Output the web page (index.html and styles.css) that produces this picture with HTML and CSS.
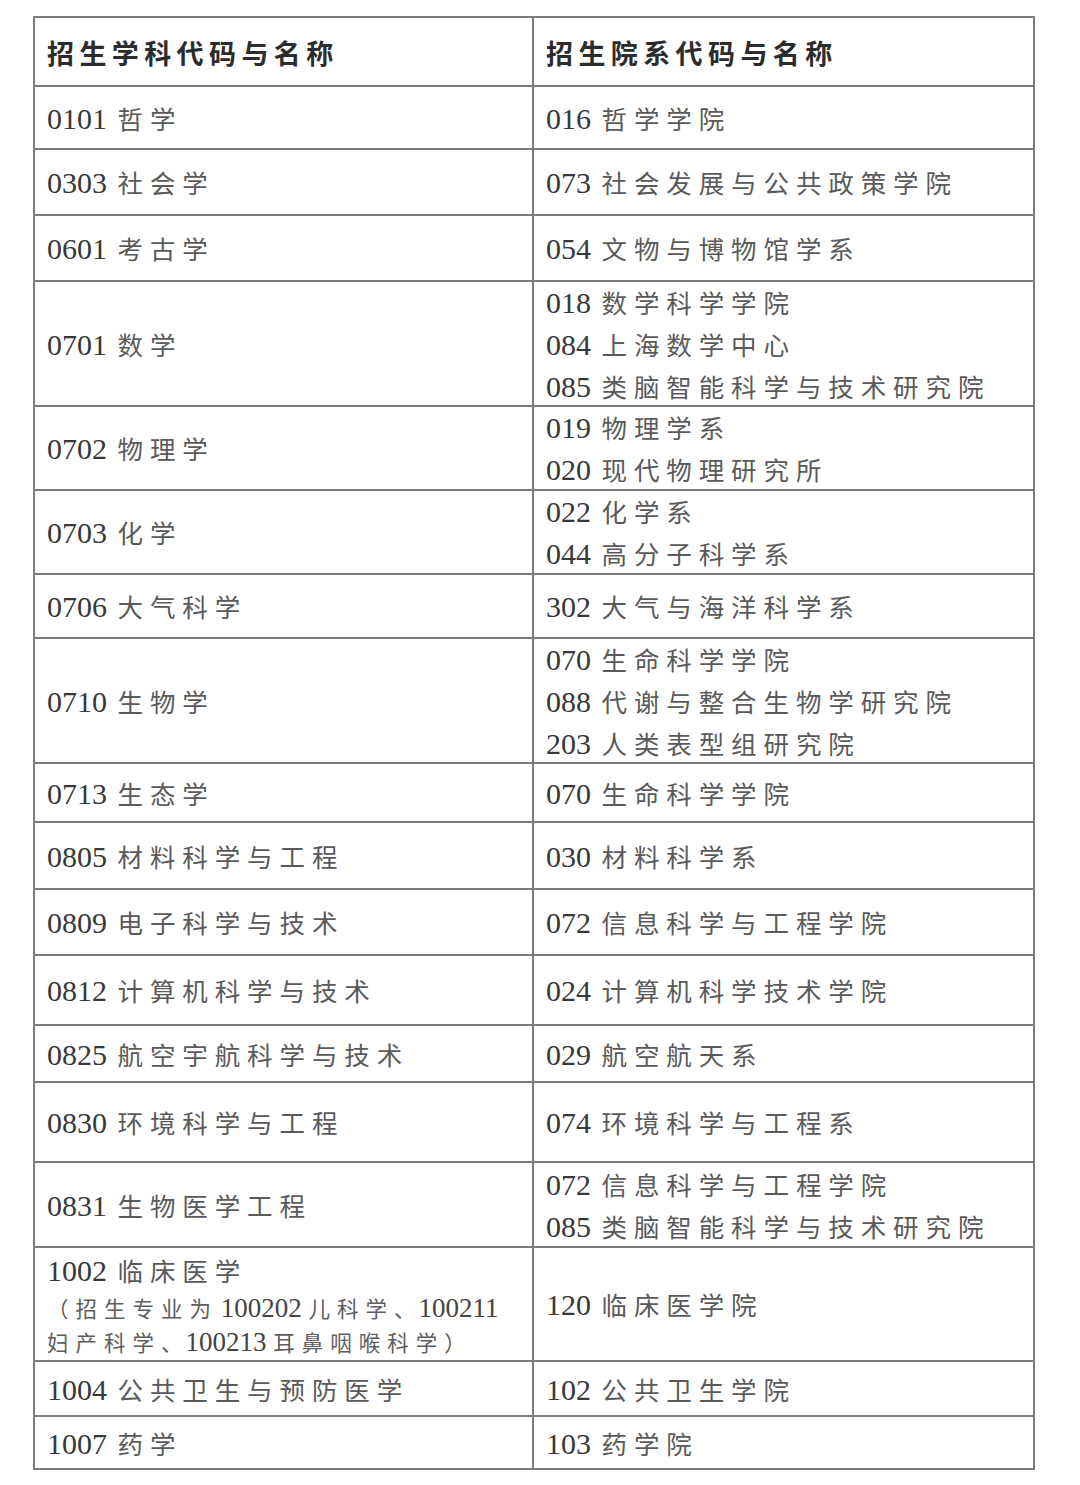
FILE: index.html
```html
<!DOCTYPE html>
<html lang="zh-CN">
<head>
<meta charset="utf-8">
<title>招生学科与院系</title>
<link rel="stylesheet" href="styles.css">
</head>
<body>
<div class="sheet">
  <div class="cell head"><span class="h">招生学科代码与名称</span></div>
  <div class="cell head"><span class="h">招生院系代码与名称</span></div>

  <div class="cell"><div class="ln"><span class="c">0101</span> <span class="n">哲学</span></div></div>
  <div class="cell"><div class="ln"><span class="c">016</span> <span class="n">哲学学院</span></div></div>

  <div class="cell"><div class="ln"><span class="c">0303</span> <span class="n">社会学</span></div></div>
  <div class="cell"><div class="ln"><span class="c">073</span> <span class="n">社会发展与公共政策学院</span></div></div>

  <div class="cell"><div class="ln"><span class="c">0601</span> <span class="n">考古学</span></div></div>
  <div class="cell"><div class="ln"><span class="c">054</span> <span class="n">文物与博物馆学系</span></div></div>

  <div class="cell"><div class="ln"><span class="c">0701</span> <span class="n">数学</span></div></div>
  <div class="cell">
    <div class="ln"><span class="c">018</span> <span class="n">数学科学学院</span></div>
    <div class="ln"><span class="c">084</span> <span class="n">上海数学中心</span></div>
    <div class="ln"><span class="c">085</span> <span class="n">类脑智能科学与技术研究院</span></div>
  </div>

  <div class="cell"><div class="ln"><span class="c">0702</span> <span class="n">物理学</span></div></div>
  <div class="cell">
    <div class="ln"><span class="c">019</span> <span class="n">物理学系</span></div>
    <div class="ln"><span class="c">020</span> <span class="n">现代物理研究所</span></div>
  </div>

  <div class="cell"><div class="ln"><span class="c">0703</span> <span class="n">化学</span></div></div>
  <div class="cell">
    <div class="ln"><span class="c">022</span> <span class="n">化学系</span></div>
    <div class="ln"><span class="c">044</span> <span class="n">高分子科学系</span></div>
  </div>

  <div class="cell"><div class="ln"><span class="c">0706</span> <span class="n">大气科学</span></div></div>
  <div class="cell"><div class="ln"><span class="c">302</span> <span class="n">大气与海洋科学系</span></div></div>

  <div class="cell"><div class="ln"><span class="c">0710</span> <span class="n">生物学</span></div></div>
  <div class="cell">
    <div class="ln"><span class="c">070</span> <span class="n">生命科学学院</span></div>
    <div class="ln"><span class="c">088</span> <span class="n">代谢与整合生物学研究院</span></div>
    <div class="ln"><span class="c">203</span> <span class="n">人类表型组研究院</span></div>
  </div>

  <div class="cell"><div class="ln"><span class="c">0713</span> <span class="n">生态学</span></div></div>
  <div class="cell"><div class="ln"><span class="c">070</span> <span class="n">生命科学学院</span></div></div>

  <div class="cell"><div class="ln"><span class="c">0805</span> <span class="n">材料科学与工程</span></div></div>
  <div class="cell"><div class="ln"><span class="c">030</span> <span class="n">材料科学系</span></div></div>

  <div class="cell"><div class="ln"><span class="c">0809</span> <span class="n">电子科学与技术</span></div></div>
  <div class="cell"><div class="ln"><span class="c">072</span> <span class="n">信息科学与工程学院</span></div></div>

  <div class="cell"><div class="ln"><span class="c">0812</span> <span class="n">计算机科学与技术</span></div></div>
  <div class="cell"><div class="ln"><span class="c">024</span> <span class="n">计算机科学技术学院</span></div></div>

  <div class="cell"><div class="ln"><span class="c">0825</span> <span class="n">航空宇航科学与技术</span></div></div>
  <div class="cell"><div class="ln"><span class="c">029</span> <span class="n">航空航天系</span></div></div>

  <div class="cell"><div class="ln"><span class="c">0830</span> <span class="n">环境科学与工程</span></div></div>
  <div class="cell"><div class="ln"><span class="c">074</span> <span class="n">环境科学与工程系</span></div></div>

  <div class="cell"><div class="ln"><span class="c">0831</span> <span class="n">生物医学工程</span></div></div>
  <div class="cell">
    <div class="ln"><span class="c">072</span> <span class="n">信息科学与工程学院</span></div>
    <div class="ln"><span class="c">085</span> <span class="n">类脑智能科学与技术研究院</span></div>
  </div>

  <div class="cell">
    <div class="ln"><span class="c">1002</span> <span class="n">临床医学</span></div>
    <div class="note"><span class="m">（招生专业为</span> <span class="d">100202</span> <span class="m">儿科学、</span><span class="d">100211</span><br><span class="m">妇产科学、</span><span class="d">100213</span> <span class="m">耳鼻咽喉科学）</span></div>
  </div>
  <div class="cell"><div class="ln"><span class="c">120</span> <span class="n">临床医学院</span></div></div>

  <div class="cell"><div class="ln"><span class="c">1004</span> <span class="n">公共卫生与预防医学</span></div></div>
  <div class="cell"><div class="ln"><span class="c">102</span> <span class="n">公共卫生学院</span></div></div>

  <div class="cell"><div class="ln"><span class="c">1007</span> <span class="n">药学</span></div></div>
  <div class="cell"><div class="ln"><span class="c">103</span> <span class="n">药学院</span></div></div>
</div>
</body>
</html>
```

FILE: styles.css
```css
html, body {
  margin: 0;
  padding: 0;
  background: #ffffff;
}

body {
  font-family: "Liberation Serif", "Noto Sans CJK SC", serif;
  color: #3a3a3a;
}

.sheet {
  display: grid;
  grid-template-columns: 497px 499px;
  grid-template-rows: 67px 61px 64px 64px 123px 82px 82px 62px 123px 57px 65px 64px 68px 55px 78px 83px 112px 53px 51px;
  gap: 2px;
  padding: 2px;
  width: max-content;
  margin: 16px 0 0 33px;
  background: #7c7c7c;
}

.cell {
  background: #ffffff;
  display: flex;
  flex-direction: column;
  justify-content: center;
  padding: 0 12px;
  overflow: hidden;
}

.head {
  padding-top: 2px;
}

.h {
  font-family: "Noto Sans CJK SC", sans-serif;
  font-size: 27px;
  font-weight: 700;
  letter-spacing: 5.4px;
  color: #2c2c2c;
  line-height: 40px;
}

.ln {
  font-size: 30px;
  line-height: 41px;
  white-space: nowrap;
}

.c {
  font-family: "Liberation Serif", serif;
  font-size: 30px;
  color: #383838;
}

.n {
  font-family: "Noto Sans CJK SC", sans-serif;
  font-size: 25.5px;
  letter-spacing: 6.9px;
  color: #5a5a5a;
  margin-left: 3px;
}

.note {
  font-size: 27px;
  line-height: 34px;
  white-space: nowrap;
}

.m {
  font-family: "Noto Sans CJK SC", sans-serif;
  font-size: 21.5px;
  letter-spacing: 7px;
  color: #5e5e5e;
}

.d {
  font-family: "Liberation Serif", serif;
  font-size: 27px;
  color: #444444;
  margin-left: -4px;
}
```
